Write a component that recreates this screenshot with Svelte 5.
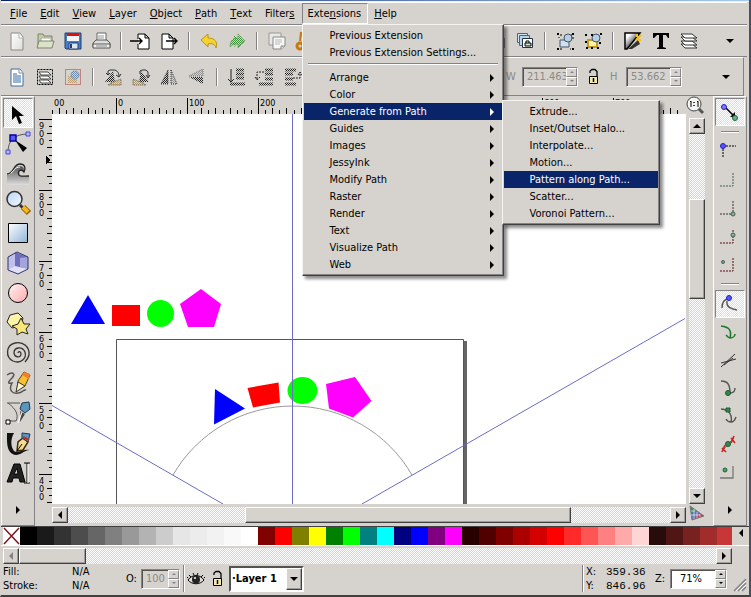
<script>
    // Menu bar: text before the access key, the key, text after it
    const menus = [
        ['', 'F', 'ile'],
        ['', 'E', 'dit'],
        ['', 'V', 'iew'],
        ['', 'L', 'ayer'],
        ['', 'O', 'bject'],
        ['', 'P', 'ath'],
        ['', 'T', 'ext'],
        ['Filter', 's', ''],
        ['Exte', 'n', 'sions'],
        ['', 'H', 'elp']
    ]
    const openMenu = 8

    const extensionMenu = [
        { label: 'Previous Extension' },
        { label: 'Previous Extension Settings...' },
        { separator: true },
        { label: 'Arrange', more: true },
        { label: 'Color', more: true },
        {
            label: 'Generate from Path', more: true, active: true,
            items: ['Extrude...', 'Inset/Outset Halo...', 'Interpolate...', 'Motion...', 'Pattern along Path...', 'Scatter...', 'Voronoi Pattern...']
        },
        { label: 'Guides', more: true },
        { label: 'Images', more: true },
        { label: 'JessyInk', more: true },
        { label: 'Modify Path', more: true },
        { label: 'Raster', more: true },
        { label: 'Render', more: true },
        { label: 'Text', more: true },
        { label: 'Visualize Path', more: true },
        { label: 'Web', more: true }
    ]
    const activeSub = 'Pattern along Path...'

    // '|' is a separator
    const commands = ['new', 'open', 'save', 'print', '|', 'import', 'export', '|', 'undo', 'redo', '|', 'copy', 'cut', 'paste', '|',
        'zoom', 'zoom', 'zoom', '|', 'clone', 'clone', 'unlink', '|', 'group', 'ungroup', '|', 'fill', 'text', 'layers']
    const selectCommands = ['selectAll', 'selectLayers', 'deselect', '|', 'rotateLeft', 'rotateRight', 'flipH', 'flipV', '|', 'lower', 'lowerOne', 'raiseOne', 'raise', '|']
    const tools = ['select', 'node', 'tweak', 'magnify', 'rect', 'box', 'ellipse', 'star', 'spiral', 'pencil', 'pen', 'calligraphy', 'type']
    const snaps = ['snap', '|', 'bbox', 'bboxEdge', 'bboxCorner', 'bboxMid', 'bboxCenter', '|', 'snapNode', 'snapPath', 'snapCross', 'snapCusp', 'snapSmooth', 'snapMid', 'snapObject']
    const pressed = ['select', 'snap', 'snapNode']

    const palette = ['#000000', '#1a1a1a', '#333333', '#4d4d4d', '#666666', '#808080', '#999999', '#b3b3b3', '#cccccc', '#e6e6e6', '#ececec', '#f2f2f2', '#f9f9f9', '#ffffff',
        '#800000', '#ff0000', '#808000', '#ffff00', '#008000', '#00ff00', '#008080', '#00ffff', '#000080', '#0000ff', '#800080', '#ff00ff',
        '#280000', '#500000', '#800000', '#aa0000', '#d40000', '#ff0000', '#ff2a2a', '#ff5555', '#ff8080', '#ffaaaa', '#ffd5d5',
        '#280b0b', '#501616', '#782121', '#a02c2c', '#c83737']

    // Rulers: 100 units are 71 pixels at this zoom
    const step = 71
    const hMajor = [-1, 0, 1, 2, 3, 4, 5, 6, 7].map((n) => ({
        at: 65 + n * step,
        // the label left of the origin is scrolled half out of the ruler
        x: n < 0 ? 2 : 66 + n * step,
        label: n < 0 ? '00' : String(n * 100)
    }))
    const vMajor = [9, 8, 7, 6, 5, 4].map((n) => ({ at: 5 + (9 - n) * step, label: String(n * 100) }))
    const minor = [1, 2, 3, 4, 5, 6, 7, 8, 9]

    const icons = {
        new: '<path d="M6 4h9l3 4v13H6z" fill="url(#paper)" stroke="#8a8a86"/><path d="M14 4v5h4" fill="#fff" stroke="#b4b4b0"/>',
        open: '<path d="M5 19V5h5l1 2h8v5" fill="#c2cba8" stroke="#7d8667"/><path d="M8 9h10v5H8z" fill="#fff" stroke="#aaa"/><path d="M4 19l2-7h15l-2 7z" fill="#dce2c8" stroke="#7d8667"/>',
        save: '<path d="M4 4h16v16H5l-1-1z" fill="#477fc6" stroke="#233e70"/><path d="M6 4h12v8H6z" fill="#f5f5f5"/><path d="M6 4h12v3H6z" fill="#e01010"/><path d="M8 14h9v6H8z" fill="#dfe5ee" stroke="#233e70"/><path d="M10 15v4" stroke="#233e70" stroke-width="2"/>',
        print: '<path d="M8 12V4h9v8" fill="#fff" stroke="#666"/><path d="M9 7h6M9 9h6" stroke="#999"/><path d="M4 18v-4l3-3h11l3 3v4z" fill="#ddd" stroke="#555"/><path d="M4 15h17v4H4z" fill="#f0f0ee" stroke="#555"/><path d="M7 17h11" stroke="#888"/>',
        import: '<path d="M9 5h7l4 4v11H9v-5M9 10V5M16 5v4h4" fill="#fff" stroke="#000"/><path d="M1 12h12M10 9l3 3-3 3" fill="none" stroke="#000" stroke-width="1.4"/>',
        export: '<path d="M5 5h7l4 4v11H5zM12 5v4h4" fill="#fff" stroke="#000"/><path d="M9 12h11M17 9l3 3-3 3" fill="none" stroke="#000" stroke-width="1.4"/>',
        undo: '<path d="M4 11l7-6v4c7 0 10 4 8 10-1-4-4-5-8-4v3z" fill="#f6d32a" stroke="#b89418"/>',
        redo: '<path d="M20 12l-7-7v4c-6 0-8 4-8 9 2-2 4-4 8-3v4z" fill="url(#ditherGreen)" stroke="#568a50" stroke-dasharray="1 1"/><path d="M15 12l-6-6v12z" fill="url(#ditherGreen)"/>',
        copy: '<path d="M4 4h12v12H4z" fill="#e8e8e4" stroke="#999"/><path d="M8 8h12v9l-4 3H8z" fill="#f6f6f4" stroke="#888"/><path d="M10 11h7M10 13h7M10 15h5" stroke="#bbb"/><path d="M16 20v-3h4" fill="#ddd" stroke="#888"/>',
        cut: '<path d="M8 3l4 12M12 3l-3 12" stroke="#999" stroke-width="2"/><circle cx="7" cy="17" r="3" fill="none" stroke="#c87a12" stroke-width="3"/><path d="M8 3l-1 9" stroke="#c87a12" stroke-width="2"/><circle cx="14" cy="18" r="3" fill="none" stroke="#c87a12" stroke-width="2"/>',
        paste: '<path d="M5 5h13v15H5z" fill="#c9a36a" stroke="#7a5a22"/><path d="M8 8h9v11H8z" fill="#fff"/>',
        zoom: '<circle cx="10" cy="10" r="6" fill="#e8f0f8" stroke="#555"/><path d="M15 15l5 5" stroke="#555" stroke-width="3"/>',
        clone: '<path d="M4 4h11v10H4z" fill="#c5d7e8" stroke="#223"/><path d="M9 9h10v10H9z" fill="#fff" stroke="#223"/>',
        unlink: '<path d="M4.500 4.500h10v9h-10z" fill="#d5e5f2" stroke="#467"/><path d="M6.500 6.500h10v10h-10z" fill="#b9d2e8" stroke="#467"/><path d="M9.500 9.500h10v9h-10z" fill="#fff" stroke="#234"/><path d="M12 14h6v3h-6z" fill="#cfe8c8" stroke="#000"/><path d="M13 14v-2h3v2" fill="none" stroke="#000"/>',
        group: '<path d="M7 11h9v7H7z" fill="#cfe0f0" stroke="#456"/><circle cx="15" cy="9" r="4" fill="#b9cfe6" stroke="#456"/><path d="M4 4h2v2H4zM19 4h2v2h-2zM4 19h2v2H4zM19 19h2v2h-2z"/><path d="M7 6h2M6 8v1M18 6h1M20 8v2M7 20h2M17 20h1" stroke="#000"/>',
        ungroup: '<path d="M7 11h9v7H7z" fill="#fff3b0" stroke="#c89a10" stroke-width="2"/><circle cx="15" cy="9" r="4" fill="#b9cfe6" stroke="#456"/><path d="M4 5h2v2H4zM10 5h2v2h-2zM19 4h2v2h-2zM4 12h2v2H4zM5 18h2v2H5zM10 18h2v2h-2zM16 18h2v2h-2zM18 13h2v2h-2z"/>',
        fill: '<path d="M4 4h15L6 20H4z" fill="url(#swatch)" stroke="#000" stroke-width="1.5"/><path d="M7 20l10-9 2 4-8 5z" fill="#333"/><path d="M15 11l5-5M17 11h3M16 8V5" stroke="#f0c020" stroke-width="2"/>',
        text: '<path d="M4 4h16v5h-1l-2-3h-3v12l3 1v1H8v-1l2-1V6H8L5 9H4z" fill="#000"/>',
        layers: '<g fill="#fff" stroke="#333"><path d="M4 15h11l5 4H8z"/><path d="M4 12h11l5 4H8z"/><path d="M4 8h11l5 4H8z"/><path d="M4 5h11l5 4H8z"/></g>',
        selectAll: '<path d="M6 4h9l3 4v13H6z" fill="#fff" stroke="#3b6ea5" /><path d="M8 9h4M8 11h8M8 13h8M8 15h8M8 17h8" stroke="#3468a8"/><path d="M14 4v4h4" fill="#fff" stroke="#889"/>',
        selectLayers: '<path d="M4.500 4.500h15v15h-15z" fill="none" stroke="#000" stroke-dasharray="2 1"/><g fill="#fff" stroke="#444"><path d="M6 15h9l3 3H8z"/><path d="M6 11h9l3 3H8z"/><path d="M6 7h9l3 3H8z"/></g>',
        deselect: '<path d="M4.500 4.500h15v15h-15z" fill="none" stroke="#a33" stroke-dasharray="1 1"/><path d="M7 11h9v7H7z" fill="url(#ditherTan)"/><circle cx="14" cy="10" r="4" fill="url(#ditherBlue)" stroke="#678" stroke-dasharray="1 1"/>',
        rotateLeft: '<path d="M12 6l2 11H4z" fill="url(#dither)"/><path d="M10 18l10-4v6H7z" fill="url(#ditherTan)" stroke="#555" stroke-dasharray="1 1"/><path d="M7 9V6l2-1h4c3 0 5 3 5 6M15 10l3 2 2-3M5 8l2 2 2-2" fill="none" stroke="#333"/>',
        rotateRight: '<path d="M12 6l-2 11h10z" fill="url(#dither)"/><path d="M14 18L4 14v6h13z" fill="url(#ditherTan)" stroke="#555" stroke-dasharray="1 1"/><path d="M11 9V6l2-1h4l2 2v5M17 10l2 3 2-3" fill="none" stroke="#333"/>',
        flipH: '<path d="M11 5v14H4z" fill="url(#dither)" stroke="#444" stroke-dasharray="1 1"/><path d="M14 5v14h6z" fill="url(#ditherLight)" stroke="#333" stroke-dasharray="1 1"/>',
        flipV: '<path d="M4 11h14V4z" fill="url(#ditherLight)" stroke="#777" stroke-dasharray="1 1"/><path d="M4 12h14v7z" fill="url(#dither)"/>',
        lower: '<path d="M6 4v12M3 14l3 3 3-3" fill="none" stroke="#222"/><path d="M11 5h8M11 9h8M11 13h8M5 19h15" stroke="url(#dither)" stroke-width="3"/>',
        lowerOne: '<path d="M12 5h8M12 9h8M12 14h8M6 19h14" stroke="url(#dither)" stroke-width="3"/><path d="M11 7H4v7M2 12l2 3 3-3" fill="none" stroke="#222" stroke-dasharray="2 1"/>',
        raiseOne: '<path d="M4 5h11M4 9h8M4 14h8M4 19h11" stroke="url(#dither)" stroke-width="3"/><path d="M12 13h7V7M17 10l2-3 2 3" fill="none" stroke="#222" stroke-dasharray="2 1"/>',
        raise: '<path d="M4 5h14M4 9h8M4 14h8" stroke="url(#dither)" stroke-width="3"/>',
        lock: '<path d="M7.500 11.500h8v7h-8z" fill="#f6ebac" stroke="#000"/><path d="M8 8V6l2-1.500h3l2 2v5" fill="none" stroke="#000" stroke-width="1.300"/><path d="M11.500 13v4" stroke="#000" stroke-width="1.500"/>',
        eye: '<path d="M4 13c4-6 12-6 16 0-4 5-12 5-16 0z" fill="#ddd" stroke="#000"/><circle cx="12" cy="12.500" r="4" fill="#222"/><circle cx="11" cy="11" r="1" fill="#fff"/><path d="M5 8l2 2M9 6l1 2M14 6l-1 2M19 8l-2 2M4 11l-1-1M20 11l1-1" stroke="#000"/>',
        zoomOne: '<path d="M16 16l4 4" stroke="#555" stroke-width="3"/><circle cx="11" cy="11" r="7" fill="#f4f4f2" stroke="#444"/><path d="M7 9l1-1v6M14 9l1-1v6" fill="none" stroke="#000"/><path d="M11 9v1M11 12v1" stroke="#000" stroke-width="1.500"/>',
        cms: '<path d="M4 4l2 14 12-4z" fill="url(#gamut)" stroke="#777"/><path d="M5 9h4M5 13h9M8 7v10M11 10v6M14 12v3" stroke="#fff" stroke-width=".6"/>',

        // Toolbox, on a 28 grid
        select: '<path d="M8 7v14l4-4 3 8 3-1-3-7h5z" fill="#000"/>',
        node: '<path d="M4 23C4 12 10 5 24 5" fill="none" stroke="#555"/><g fill="#b8b8ff" stroke="#4444d8"><path d="M22 3h4v4h-4z"/><path d="M2 21h4v4H2z"/></g><path d="M6 6h6v6H6z" fill="#5a5af0" stroke="#0000a0" stroke-width="1.400"/><path d="M11 11l12 8-4 4z" fill="#000"/>',
        tweak: '<path d="M3 26V16c7 0 6-8 12-9 4 0 6 2 5 6-3-3-6-1-5 3 1 2 3 1 10 1v9z" fill="url(#steel)"/><path d="M3 15c7 0 6-10 13-10 5 0 6 4 4 8-3-4-7-1-5 3 1 2 5 1 10 1" fill="none" stroke="#222" stroke-width="1.300"/><path d="M7 14c3-2 4-6 9-6" fill="none" stroke="#fff"/>',
        magnify: '<path d="M16 16l3 3" stroke="#333" stroke-width="3"/><path d="M19 18l6 6" stroke="#8a6400" stroke-width="6"/><path d="M19 18l5 5" stroke="#f6b422" stroke-width="4"/><circle cx="10.500" cy="10" r="7.500" fill="url(#glass)" stroke="#333" stroke-width="1.500"/>',
        rect: '<path d="M4.500 4.500h19v19h-19z" fill="url(#sky)" stroke="#000"/>',
        box: '<path d="M4 8l7-5v15l-7 3z" fill="#c0c0ec"/><path d="M11 3l13 5v12l-13-2z" fill="#6e6ebc"/><path d="M16 9l8-1v12l-8-2z" fill="#a4a4dc"/><path d="M4 21l7-4 13 3-10 5z" fill="#e0e0f8"/><path d="M4 8l9-5 11 5v12l-10 5-10-4z" fill="none" stroke="#33336a"/>',
        ellipse: '<circle cx="14" cy="14" r="9.500" fill="url(#rose)" stroke="#000"/>',
        star: '<path d="M6 6l8-2 5 5-2 8-9 2-5-6z" fill="#fbf3a8" stroke="#222"/><path d="M17 9l3 6 6 0-4 5 2 5-6-2-5 3 0-6-5-3 6-2z" fill="#fae678" stroke="#222"/>',
        spiral: '<path d="M14 14c0-2 3-2 3 1 0 4-6 4-7-1 0-6 8-7 11-1 2 7-5 12-12 9C1 18 2 6 11 4c8-2 15 4 14 12-1 4-3 6-4 7" fill="none" stroke="#333" stroke-width="1.300"/>',
        pencil: '<path d="M3 6c6-4 9-1 5 3-5 5-4 6 0 5-4 8 1 11 6 10 5 0 5-4 8-3" fill="none" stroke="#555" stroke-width="1.500"/><path d="M13 21l1-9 6-9 6 3-5 11z" fill="#f6c030" stroke="#5a4000"/><path d="M20 3l6 2-1 5-7-4z" fill="#f08030"/><path d="M12 23l2-10 7 4z" fill="#fff3c8" stroke="#333"/>',
        pen: '<path d="M3 4h13M4 4c8 6 11 12 8 18H5" fill="none" stroke="#555"/><path d="M2 21h4v4H2z" fill="#fff" stroke="#000"/><path d="M18 4l7-1 1 7-5 4-5-4z" fill="#5c96be" stroke="#1d3b54"/><path d="M16 12l5 3-5 8c0-3 1-6 0-11z" fill="#444"/><path d="M14 24l4-11" stroke="#fff"/>',
        calligraphy: '<path d="M3 4h7c-4 7-3 14 0 18 4 3 9-2 15-1-6 1-8 5-13 5C2 25 3 12 3 4z" fill="#111"/><path d="M13 22l1-9 5-4 5 4-5 8z" fill="#f6dc90" stroke="#3a2a00" stroke-width="1.500"/><path d="M18 4l8 1-2 8-6-4z" fill="#5c96be" stroke="#1d3b54"/><path d="M13 22l5-7" stroke="#000"/><path d="M19 8l6 3" stroke="#c03020" stroke-width="2"/>',
        type: '<path d="M3 23L10 5h6l5 18h-5l-1-4H9l-1 4zM10 15h4l-1-6z" fill="#222" fill-rule="evenodd" stroke="#000"/><path d="M20 4h6M23 4v20M20 24h6" stroke="#000"/><path d="M24 5v19" stroke="#fff"/>',

        // Snap bar
        snap: '<path d="M8 8l9 9" stroke="#000" stroke-width="1.500"/><path d="M17 12v5h-5z"/><circle cx="6" cy="7" r="2.500" fill="#7c7cff" stroke="#2020c0"/><circle cx="17" cy="18" r="2.500" fill="#6ab088" stroke="#1f6a3c"/>',
        bbox: '<path d="M5 6h13M5 6v12" fill="none" stroke="#000" stroke-dasharray="2 1"/><circle cx="5" cy="6" r="2.500" fill="#5555ff" stroke="#2020c0"/>',
        bboxEdge: '<path d="M15 5v13M2 18h13" fill="none" stroke="#3f5f4f" stroke-dasharray="2 1"/>',
        bboxCorner: '<path d="M15 5v13M2 18h13" fill="none" stroke="#333" stroke-dasharray="2 1"/><circle cx="15" cy="18" r="2" fill="#8fae9c" stroke="#3f5f4f"/>',
        bboxMid: '<path d="M15 6v13M2 19h13" fill="none" stroke="#511" stroke-dasharray="2 1"/><circle cx="15" cy="11" r="2" fill="#8fae9c" stroke="#3f5f4f"/>',
        bboxCenter: '<path d="M15 6v13M2 19h13" fill="none" stroke="#511" stroke-dasharray="2 1"/><circle cx="5" cy="10" r="1.500" fill="#8fae9c" stroke="#3f5f4f"/>',
        snapNode: '<path d="M4 16c0-6 3-9 7-9M9 9c-1 6 4 8 10 9" fill="none" stroke="#555" stroke-width="1.400"/><circle cx="11" cy="6" r="2.500" fill="#5555ff" stroke="#2020c0"/>',
        snapPath: '<path d="M3 6c8 1 11 4 9 12 3 0 5-2 5-4M8 15c1 1 2 3 4 3" fill="none" stroke="#1f7a2c" stroke-width="1.600"/>',
        snapCross: '<path d="M3 19L17 6M3 15l15-4M6 17l9-7" fill="none" stroke="#333"/>',
        snapCusp: '<path d="M3 5c7 0 9 4 9 12M12 17c3 0 5-2 5-5" fill="none" stroke="#555" stroke-width="1.400"/><circle cx="10" cy="17" r="2.500" fill="#2f8a4c" stroke="#1b5c30"/>',
        snapSmooth: '<path d="M3 5c3 0 5 1 7 2 4 4 4 7 3 11 3 0 4-2 5-5M8 15c1 2 3 3 5 3" fill="none" stroke="#555" stroke-width="1.400"/><path d="M8 4h4v4H8z" fill="#2f8a4c" stroke="#1b5c30"/>',
        snapMid: '<path d="M4 19L16 6" stroke="#555"/><path d="M4 16l4 4M4 20l3-7M13 6l4 5M13 11l3-7" stroke="#d02020" stroke-width="1.600"/><circle cx="10" cy="12" r="2.500" fill="#2f8a4c" stroke="#1b5c30"/>',
        snapObject: '<path d="M15 6v12H2" fill="none" stroke="#777" stroke-width="1.300"/><circle cx="7" cy="10" r="2" fill="#4fa86c" stroke="#1b5c30"/>'
    }

    let opacity = '100'
    let zoomLevel = '71%'
    let layer = 'Layer 1'
</script>

{#snippet icon(name, size = 24)}
    <svg class="icon" width={size} height={size} viewBox="0 0 {size} {size}" aria-hidden="true">{@html icons[name]}</svg>
{/snippet}

{#snippet arrow(dir)}
    <span class="arrow {dir}"></span>
{/snippet}

{#snippet spin(label, id, value)}
    <label class="dim" for={id}>{label}</label>
    <span class="spin">
        <input {id} class="short" type="text" {value} disabled />
        <span class="steps">
            <button aria-label="Increase" disabled>{@render arrow('up tiny')}</button>
            <button aria-label="Decrease" disabled>{@render arrow('down tiny')}</button>
        </span>
    </span>
{/snippet}

{#snippet scroller(kind, before, thumb, after)}
    <div class="scroll {kind}">
        <button class="raised" aria-label="Scroll back">{@render arrow(kind == 'vertical' ? 'up' : 'left')}</button>
        <span style="flex-grow: {before}"></span>
        <span class="raised" style="flex-grow: {thumb}"></span>
        <span style="flex-grow: {after}"></span>
        <button class="raised" aria-label="Scroll forward">{@render arrow(kind == 'vertical' ? 'down' : 'right')}</button>
    </div>
{/snippet}

<svg class="defs" width="0" height="0" aria-hidden="true">
    <defs>
        <linearGradient id="paper" x2="1" y2="1"><stop offset="0" stop-color="#fff" /><stop offset="1" stop-color="#deded8" /></linearGradient>
        <linearGradient id="swatch" x2="1" y2="1"><stop offset=".2" stop-color="#fff" /><stop offset=".7" stop-color="#222" /></linearGradient>
        <linearGradient id="steel" x2="0" y2="1"><stop offset="0" stop-color="#555" /><stop offset="1" stop-color="#ddd" /></linearGradient>
        <linearGradient id="glass" x2="1" y2="1"><stop offset="0" stop-color="#b8d4f4" /><stop offset="1" stop-color="#f4f9ff" /></linearGradient>
        <linearGradient id="sky" x2="1" y2="1"><stop offset="0" stop-color="#fff" /><stop offset="1" stop-color="#8fb4d8" /></linearGradient>
        <linearGradient id="rose" x2="1" y2="1"><stop offset="0" stop-color="#fff4f4" /><stop offset="1" stop-color="#ffaaae" /></linearGradient>
        <linearGradient id="gamut" x2="1" y2="1"><stop offset=".1" stop-color="#1fa03c" /><stop offset=".5" stop-color="#6070d0" /><stop offset=".8" stop-color="#e02020" /></linearGradient>
        {#each [['dither', '#222'], ['ditherLight', '#999'], ['ditherGreen', '#3f8f3a'], ['ditherTan', '#b8a070'], ['ditherBlue', '#6d8fb4']] as [id, color]}
            <pattern {id} width="2" height="2" patternUnits="userSpaceOnUse"><path d="M0 0h1v1H0zM1 1h1v1H1z" fill={color} /></pattern>
        {/each}
    </defs>
</svg>

<main>
    <div class="title"></div>

    <nav class="menubar">
        {#each menus as [pre, key, post], i}
            <div class="entry">
                <button class:open={i == openMenu}>{pre}<u>{key}</u>{post}</button>
                {#if i == openMenu}
                    <ul class="menu">
                        {#each extensionMenu as item}
                            {#if item.separator}
                                <li class="line"></li>
                            {:else}
                                <li>
                                    <button class:active={item.active}>{item.label}{#if item.more}{@render arrow('right')}{/if}</button>
                                    {#if item.items}
                                        <ul class="menu sub">
                                            {#each item.items as label}
                                                <li><button class:active={label == activeSub}>{label}</button></li>
                                            {/each}
                                        </ul>
                                    {/if}
                                </li>
                            {/if}
                        {/each}
                    </ul>
                {/if}
            </div>
        {/each}
    </nav>

    <div class="toolbar">
        {#each commands as name}
            {#if name == '|'}
                <span class="divider"></span>
            {:else}
                <button aria-label={name}>{@render icon(name)}</button>
            {/if}
        {/each}
        <button class="overflow" aria-label="More commands">{@render arrow('down')}</button>
    </div>

    <div class="toolbar controls">
        {#each selectCommands as name}
            {#if name == '|'}
                <span class="divider"></span>
            {:else}
                <button aria-label={name}>{@render icon(name)}</button>
            {/if}
        {/each}
        <div class="sizes">
            {@render spin('W', 'width', '211.463')}
            <button aria-label="Lock ratio">{@render icon('lock')}</button>
            {@render spin('H', 'height', '53.662')}
        </div>
        <button class="overflow" aria-label="More controls">{@render arrow('down')}</button>
    </div>

    <section class="body">
        <div class="tools">
            {#each tools as name}
                <button class:pressed={pressed.includes(name)} aria-label={name}>{@render icon(name, 28)}</button>
            {/each}
            <button class="last" aria-label="More tools">{@render arrow('right')}</button>
        </div>

        <div class="work">
            <svg class="ruler top" aria-hidden="true">
                {#each hMajor as mark}
                    <path d="M{mark.at - .5} 2v16" />
                    <text x={mark.x} y="10">{mark.label}</text>
                    {#each minor as n}
                        <path d="M{Math.round(mark.at + n * step / 10) - .5} {n % 2 ? 14 : 12}v6" />
                    {/each}
                {/each}
            </svg>
            <button class="zoomOne" aria-label="Zoom 1:1">{@render icon('zoomOne')}</button>

            <svg class="ruler side" aria-hidden="true">
                {#each vMajor as mark}
                    <path d="M4 {mark.at + .5}h13" />
                    {#each mark.label as digit, i}
                        <text x="4" y={mark.at + 10 + i * 8}>{digit}</text>
                    {/each}
                    {#each minor as n}
                        <path d="M{n % 2 ? 14 : 12} {Math.round(mark.at + n * step / 10) + .5}h6" />
                    {/each}
                {/each}
                <path class="marker" d="M11 42l5 4-5 4z" />
            </svg>
            <svg class="canvas" role="img" aria-label="Drawing">
                <path d="M412 227h3v900h-3z" fill="#666" />
                <path d="M64.500 1000V225.500h347V1000" fill="none" stroke="#555" />
                <path d="M121 361A138 138 0 0 1 360 361" fill="none" stroke="#999" />
                <path d="M19 210l17-29 17 29z" fill="#00f" />
                <path d="M60 191h28v21H60z" fill="#f00" />
                <circle cx="108.500" cy="199.500" r="13.500" fill="#0f0" />
                <path d="M149 175l20 15-7 23h-26l-8-23z" fill="#f0f" />
                <path d="M163 275l30 19.500-31 16z" fill="#00f" />
                <path d="M195.500 274l31-5.500 1.500 20-27 5z" fill="#f00" />
                <ellipse cx="250.500" cy="276.500" rx="15" ry="13.500" fill="#0f0" />
                <path d="M274 270l29-7 16.500 24-18.500 16.500-24-9z" fill="#f0f" />
                <path d="M240.500 0v1000M0 291.500L171 390M633 204.500L310 390" fill="none" stroke="#6c6cc8" />
            </svg>
            {@render scroller('vertical', 66, 99, 191)}
            {@render scroller('horizontal', 178, 325, 99)}
            <button class="cms" aria-label="Color management">{@render icon('cms')}</button>
        </div>

        <div class="snaps">
            {#each snaps as name}
                {#if name == '|'}
                    <span class="divider"></span>
                {:else}
                    <button class:pressed={pressed.includes(name)} aria-label={name}>{@render icon(name)}</button>
                {/if}
            {/each}
            <button class="last" aria-label="More snapping">{@render arrow('right')}</button>
        </div>
    </section>

    <div class="palette">
        <div class="swatches">
            <button class="none" aria-label="No color"><svg width="17" height="18" viewBox="0 0 17 18"><path d="M1 1l15 16M16 1L1 17" stroke="#80141e" stroke-width="1.500" /></svg></button>
            {#each palette as color}
                <button style="background: {color}" aria-label={color}></button>
            {/each}
        </div>
        <button class="more" aria-label="Palette menu">{@render arrow('left')}</button>
    </div>
    <div class="paletteScroll">{@render scroller('horizontal faded', 0, 66, 635)}</div>

    <footer>
        <dl class="style">
            <dt>Fill:</dt><dd>N/A</dd>
            <dt>Stroke:</dt><dd>N/A</dd>
        </dl>
        <label for="opacity">O:</label>
        <span class="spin">
            <input id="opacity" type="text" bind:value={opacity} disabled />
            <span class="steps">
                <button aria-label="More opaque" disabled>{@render arrow('up tiny')}</button>
                <button aria-label="Less opaque" disabled>{@render arrow('down tiny')}</button>
            </span>
        </span>
        <span class="rule"></span>
        <button aria-label="Toggle visibility">{@render icon('eye')}</button>
        <button aria-label="Lock layer">{@render icon('lock')}</button>
        <span class="layer">
            <select aria-label="Layer" bind:value={layer}>
                <option value="Layer 1">·Layer 1</option>
            </select>
            <span class="drop raised">{@render arrow('down')}</span>
        </span>
        <span class="space"></span>
        <span class="rule"></span>
        <dl class="pointer">
            <dt>X:</dt><dd>359.36</dd>
            <dt>Y:</dt><dd>846.96</dd>
        </dl>
        <label for="zoomLevel">Z:</label>
        <span class="spin zoomBox">
            <input id="zoomLevel" type="text" bind:value={zoomLevel} />
            <span class="steps">
                <button aria-label="Zoom in">{@render arrow('up tiny')}</button>
                <button aria-label="Zoom out">{@render arrow('down tiny')}</button>
            </span>
        </span>
        <svg class="grip" width="14" height="14" viewBox="0 0 14 14" aria-hidden="true">
            <path d="M1 13L13 1M5 13l8-8M9 13l4-4" stroke="#848284" stroke-width="1.500" /><path d="M3 13L13 3M7 13l6-6" stroke="#fff" />
        </svg>
    </footer>
</main>

<style>
    :global(body){
        background: #d6d3ce;
    }
    .defs{
        position: absolute;
    }
    main{
        display: flex;
        flex-direction: column;
        height: 100vh;
        box-sizing: border-box;
        border-left: 1px solid #d6d3ce;
        border-right: 2px solid #4a5060;
        border-bottom: 2px solid #404040;
        background: #d6d3ce;
        color: #000;
        font-family: "DejaVu Sans Condensed", "Noto Sans", sans-serif;
        font-size: 11px;
        line-height: 14px;
        cursor: default;
    }
    button{
        display: flex;
        align-items: center;
        justify-content: center;
        padding: 0;
        margin: 0;
        border: 0;
        background: none;
        color: inherit;
        font: inherit;
    }
    .icon{
        display: block;
        flex: none;
    }
    .title{
        height: 1px;
        border-bottom: 1px solid #f0f0f0;
        background: linear-gradient(90deg, #0a246a, #a6caf0);
    }

    .arrow{
        width: 0;
        height: 0;
        border: 4px solid transparent;
    }
    .arrow.right{
        border-left-color: currentColor;
        border-right-width: 0;
    }
    .arrow.left{
        border-right-color: currentColor;
        border-left-width: 0;
    }
    .arrow.up{
        border-bottom-color: currentColor;
        border-top-width: 0;
    }
    .arrow.down{
        border-top-color: currentColor;
        border-bottom-width: 0;
    }
    .arrow.tiny{
        border-left-width: 2px;
        border-right-width: 2px;
    }
    .arrow.up.tiny{
        border-bottom-width: 2px;
    }
    .arrow.down.tiny{
        border-top-width: 2px;
    }
    .raised{
        box-sizing: border-box;
        border: 1px solid;
        border-color: #fff #404040 #404040 #fff;
        background: #d6d3ce;
        box-shadow: inset -1px -1px #a09e9a;
    }
    .pressed{
        border: 1px solid;
        border-color: #848284 #fff #fff #848284;
        background: repeating-conic-gradient(#fff 0 25%, #e0deda 0 50%) 0 0 / 2px 2px;
    }

    .menubar{
        display: flex;
        height: 21px;
        margin-right: 2px;
        padding-left: 3px;
        border-top: 1px solid #fff;
        border-bottom: 1px solid #848284;
    }
    .entry{
        position: relative;
        display: flex;
    }
    .entry > button{
        padding: 0 6px 0 5px;
        border: 1px solid transparent;
        white-space: nowrap;
    }
    .entry > button.open{
        border-color: #848284 #fff #fff #848284;
    }
    .menu{
        position: absolute;
        z-index: 2;
        top: 100%;
        left: 0;
        width: 198px;
        margin: 0;
        padding: 2px 1px;
        list-style: none;
        border: 1px solid;
        border-color: #f4f4f2 #404040 #404040 #f4f4f2;
        background: #d6d3ce;
        box-shadow: inset -1px -1px #848284, 3px 3px 3px rgba(0, 0, 0, .45);
    }
    .menu li{
        position: relative;
    }
    .menu button{
        justify-content: space-between;
        width: 100%;
        height: 17px;
        padding: 0 8px 0 26px;
        white-space: nowrap;
    }
    .menu .active{
        background: #0a246a;
        color: #fff;
    }
    .menu .line{
        height: 2px;
        margin: 2px 4px 4px;
        box-sizing: border-box;
        border-top: 1px solid #848284;
        border-bottom: 1px solid #fff;
    }
    .menu .sub{
        top: -3px;
        left: 100%;
        width: 154px;
    }

    .toolbar{
        display: flex;
        align-items: center;
        height: 30px;
        margin-right: 2px;
        padding-left: 2px;
        border-top: 1px solid #fff;
        border-bottom: 1px solid #848284;
        overflow: hidden;
    }
    .toolbar > button{
        flex: none;
        width: 28px;
        height: 28px;
    }
    .toolbar .overflow{
        margin-left: auto;
        margin-right: 3px;
    }
    .controls{
        height: 37px;
        margin-right: 5px;
        border-right: 1px solid #848284;
    }
    .controls .overflow{
        margin-left: 30px;
    }
    .divider{
        flex: none;
        width: 2px;
        height: 18px;
        margin: 0 5px;
        box-sizing: border-box;
        border-left: 1px solid #848284;
        border-right: 1px solid #fff;
    }
    .sizes{
        display: flex;
        align-items: center;
        gap: 4px;
        margin-left: auto;
    }
    .dim{
        width: 12px;
        color: #8c8a86;
    }
    .spin{
        display: flex;
        height: 20px;
        box-sizing: border-box;
        border: 1px solid;
        border-color: #848284 #fff #fff #848284;
        box-shadow: inset 1px 1px #55534f;
    }
    .spin input{
        width: 26px;
        min-width: 0;
        box-sizing: border-box;
        padding: 0 0 0 4px;
        border: 0;
        background: none;
        font: inherit;
        color: #000;
    }
    .spin input:disabled{
        color: #8c8a86;
    }
    .spin .short{
        width: 43px;
    }
    .steps{
        display: flex;
        flex-direction: column;
        width: 11px;
    }
    .steps button{
        flex: 1;
        border: 1px solid;
        border-color: #fff #848284 #848284 #fff;
        background: #d6d3ce;
    }
    .steps button:disabled{
        color: #848284;
    }

    .body{
        display: flex;
        flex: 1;
        min-height: 0;
        padding-right: 2px;
    }
    .tools, .snaps{
        display: flex;
        flex-direction: column;
        flex: none;
        box-sizing: border-box;
        width: 34px;
        padding: 1px 1px 0;
        border-top: 1px solid #fff;
        border-left: 1px solid #fff;
        border-right: 1px solid #848284;
        border-bottom: 1px solid #848284;
    }
    .tools button{
        height: 30px;
        box-sizing: border-box;
    }
    .snaps button{
        height: 28px;
        box-sizing: border-box;
    }
    .tools .last, .snaps .last{
        margin-top: auto;
        height: 30px;
    }
    .snaps .divider{
        width: 18px;
        height: 2px;
        margin: 5px auto;
        border: 0;
        border-top: 1px solid #848284;
        border-bottom: 1px solid #fff;
    }
    .work{
        display: grid;
        flex: 1;
        min-width: 0;
        grid-template-columns: 17px 1fr 19px;
        grid-template-rows: 18px 1fr 20px;
        padding: 0 8px 2px 0;
    }
    .ruler{
        display: block;
        overflow: hidden;
        font-size: 9px;
        shape-rendering: crispEdges;
    }
    .ruler path{
        stroke: #000;
    }
    .ruler .marker{
        stroke: none;
    }
    .top{
        grid-column: 2;
        width: 100%;
        height: 18px;
    }
    .side{
        width: 17px;
        height: 100%;
    }
    .canvas{
        display: block;
        width: 100%;
        height: 100%;
        background: #fff;
        overflow: hidden;
    }
    .scroll{
        display: flex;
        background: repeating-conic-gradient(#fff 0 25%, #d6d3ce 0 50%) 0 0 / 2px 2px;
    }
    .scroll > button{
        flex: none;
        width: 16px;
        height: 16px;
    }
    .scroll > span{
        flex-basis: 0;
    }
    .vertical{
        flex-direction: column;
        width: 16px;
        margin-left: 3px;
        margin-top: 4px;
    }
    .horizontal{
        height: 16px;
    }
    .work .horizontal{
        grid-column: 2;
        margin-top: 3px;
    }
    .cms{
        width: 24px;
    }
    .zoomOne{
        margin-left: -1px;
    }

    .palette{
        display: flex;
        height: 18px;
        padding-left: 2px;
        border-top: 1px solid #404040;
    }
    .swatches{
        display: flex;
        flex: 1;
        overflow: hidden;
    }
    .swatches button{
        flex: none;
        width: 17px;
        height: 18px;
    }
    .swatches .none{
        background: #fff;
    }
    .palette .more{
        width: 17px;
        height: 12px;
    }
    .paletteScroll{
        padding: 2px 17px 1px 2px;
        border-top: 1px solid #fff;
    }
    .faded > button:first-child{
        color: #848284;
    }

    footer{
        display: flex;
        align-items: center;
        height: 30px;
        box-sizing: border-box;
        padding: 0 0 3px 2px;
    }
    footer dl{
        display: grid;
        margin: 0;
    }
    footer dd{
        margin: 0;
    }
    .style{
        grid-template-columns: 69px 54px;
    }
    .pointer{
        grid-template-columns: 20px 49px;
        padding-left: 2px;
    }
    .pointer dd{
        font-family: "Liberation Mono", monospace;
    }
    footer label{
        width: 15px;
    }
    footer > button{
        width: 22px;
    }
    .rule{
        width: 2px;
        height: 27px;
        margin-left: 3px;
        box-sizing: border-box;
        border-left: 1px solid #848284;
        border-right: 1px solid #fff;
    }
    .layer{
        display: flex;
        width: 75px;
        height: 26px;
        box-sizing: border-box;
        border: 2px solid;
        border-color: #55534f #fff #fff #55534f;
        background: #fff;
    }
    .layer select{
        flex: 1;
        min-width: 0;
        padding: 0 0 0 1px;
        border: 0;
        appearance: none;
        background: #fff;
        color: #000;
        font: inherit;
        font-weight: bold;
    }
    .drop{
        display: flex;
        align-items: center;
        justify-content: center;
        width: 16px;
        pointer-events: none;
    }
    .space{
        flex: 1;
    }
    .zoomBox{
        background: #fff;
    }
    .zoomBox input{
        width: 44px;
        padding-left: 9px;
    }
    .grip{
        align-self: flex-end;
        margin: 0 2px 0 6px;
    }
</style>
